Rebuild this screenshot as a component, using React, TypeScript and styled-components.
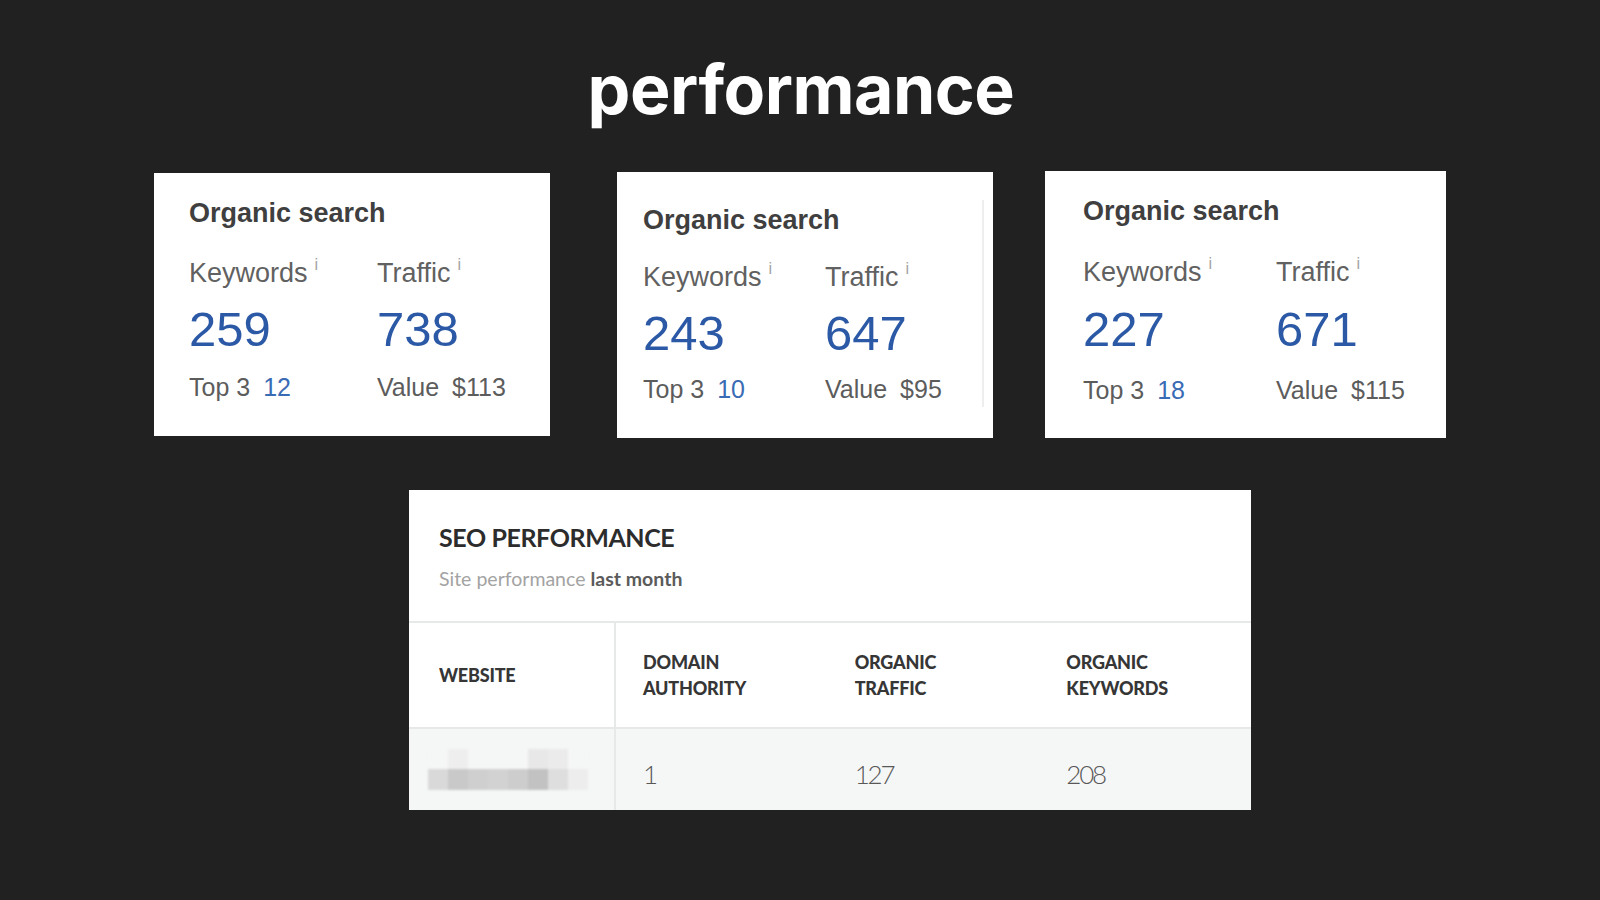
import React from "react";
import styled, { createGlobalStyle } from "styled-components";

const Global = createGlobalStyle`
  html, body { margin: 0; padding: 0; background: #202120; }
  body { width: 1600px; height: 900px; overflow: hidden; }
  * { box-sizing: border-box; }
`;

const Page = styled.div`
  width: 1600px;
  height: 900px;
  display: flex;
  flex-direction: column;
  background: #202120;
`;

const Heading = styled.h1`
  margin: 0;
  padding-top: 55px;
  padding-left: 2px;
  text-align: center;
  font-family: Inter, "Liberation Sans", sans-serif;
  font-weight: 700;
  font-size: 68px;
  line-height: 68px;
  letter-spacing: -0.5px;
  color: #ffffff;
`;

const CardRow = styled.div`
  display: flex;
  align-items: flex-start;
  margin-top: 48px;
  padding-left: 154px;
`;

const Card = styled.div<{ $w: number; $h: number; $mt: number; $ml: number; $pl: number; $pt: number; $edge?: boolean }>`
  position: relative;
  width: ${(p) => p.$w}px;
  height: ${(p) => p.$h}px;
  margin-top: ${(p) => p.$mt}px;
  margin-left: ${(p) => p.$ml}px;
  padding: ${(p) => p.$pt}px 0 0 ${(p) => p.$pl}px;
  background: #ffffff;
  font-family: "Liberation Sans", Arial, sans-serif;
  ${(p) =>
    p.$edge &&
    `&::after {
      content: "";
      position: absolute;
      right: 9px;
      top: 28px;
      height: 207px;
      width: 2px;
      background: #eeeeee;
    }`}
`;

const CardTitle = styled.div`
  font-size: 27px;
  line-height: 32px;
  font-weight: 700;
  color: #3f3f3f;
`;

const StatGrid = styled.div<{ $col: number; $gap: number }>`
  display: grid;
  grid-template-columns: ${(p) => p.$col}px auto;
  margin-top: ${(p) => p.$gap}px;
`;

const Stat = styled.div`
  display: flex;
  flex-direction: column;
`;

const Label = styled.div`
  font-size: 27px;
  line-height: 30px;
  color: #616161;
  white-space: nowrap;
`;

const Info = styled.span`
  display: inline-block;
  margin-left: 7px;
  font-size: 16px;
  line-height: 16px;
  vertical-align: 12px;
  color: #a4a4a4;
`;

const BigNum = styled.div<{ $gap: number }>`
  margin-top: ${(p) => p.$gap}px;
  font-size: 49px;
  line-height: 56px;
  color: #2b59a6;
`;

const Sub = styled.div<{ $gap: number }>`
  margin-top: ${(p) => p.$gap}px;
  font-size: 25px;
  line-height: 28px;
  color: #5c5c5c;
  white-space: nowrap;
`;

const SubVal = styled.span<{ $blue?: boolean }>`
  margin-left: 13px;
  color: ${(p) => (p.$blue ? "#3a6bb5" : "#5c5c5c")};
`;

const TableCard = styled.div`
  margin-top: 52px;
  margin-left: 409px;
  width: 842px;
  height: 320px;
  background: #ffffff;
  font-family: Lato, "Open Sans", sans-serif;
  display: flex;
  flex-direction: column;
`;

const TableHead = styled.div`
  padding: 32px 30px 31px;
`;

const TableTitle = styled.div`
  font-size: 25px;
  line-height: 30px;
  font-weight: 700;
  color: #2c2c2c;
  letter-spacing: -0.4px;
`;

const TableSub = styled.div`
  margin-top: 16px;
  font-size: 19.5px;
  line-height: 22px;
  color: #a3a3a3;
  letter-spacing: 0;
  b {
    font-weight: 700;
    color: #5b5b5b;
  }
`;

const Grid = styled.div`
  display: grid;
  grid-template-columns: 207px 1fr 1fr 1fr;
  grid-template-rows: 108px 1fr;
  flex: 1;
`;

const HeadCell = styled.div<{ $first?: boolean }>`
  border-top: 2px solid #e7e9e9;
  border-bottom: 2px solid #e7e9e9;
  ${(p) => (p.$first ? "border-right: 2px solid #e7e9e9;" : "")}
  padding-left: ${(p) => (p.$first ? 30 : 27)}px;
  display: flex;
  align-items: center;
  font-size: 18px;
  line-height: 26px;
  font-weight: 900;
  color: #363636;
  letter-spacing: -0.2px;
`;

const BodyCell = styled.div<{ $first?: boolean }>`
  background: #f5f6f6;
  ${(p) => (p.$first ? "border-right: 2px solid #e7e9e9;" : "")}
  padding: ${(p) => (p.$first ? "20px 0 0 19px" : "30px 0 0 27px")};
  font-size: 26px;
  line-height: 30px;
  font-weight: 300;
  color: #585858;
  letter-spacing: -2.2px;
`;

const Pixelated = styled.div`
  display: flex;
  filter: blur(0.8px);
`;

const PixelCol = styled.div`
  display: flex;
  flex-direction: column;
  width: 20px;
`;

const Pixel = styled.div<{ $c: string; $h: number }>`
  height: ${(p) => p.$h}px;
  background: ${(p) => p.$c};
`;

const pixels: [string, string][] = [
  ["#f5f6f6", "#d9d9d9"],
  ["#eeeeee", "#c9c9c9"],
  ["#f5f6f6", "#cfcfcf"],
  ["#f5f6f6", "#d2d2d2"],
  ["#f5f6f6", "#cdcdcd"],
  ["#e8e8e8", "#c2c2c2"],
  ["#ebebeb", "#dedede"],
  ["#f5f6f6", "#ededed"],
];

type CardData = {
  w: number; h: number; mt: number; ml: number; pl: number; pt: number; col: number; edge?: boolean;
  g1: number; g2: number; g3: number;
  kw: string; tr: string; top3: string; value: string;
};

const cards: CardData[] = [
  { w: 396, h: 263, mt: 2, ml: 0, pl: 35, pt: 24, col: 188, g1: 28, g2: 13, g3: 16, kw: "259", tr: "738", top3: "12", value: "$113" },
  { w: 376, h: 266, mt: 1, ml: 67, pl: 26, pt: 32, col: 182, edge: true, g1: 25, g2: 13, g3: 14, kw: "243", tr: "647", top3: "10", value: "$95" },
  { w: 401, h: 267, mt: 0, ml: 52, pl: 38, pt: 24, col: 193, g1: 29, g2: 14, g3: 19, kw: "227", tr: "671", top3: "18", value: "$115" },
];

export default function App() {
  return (
    <Page>
      <Global />
      <Heading>performance</Heading>
      <CardRow>
        {cards.map((c, i) => (
          <Card key={i} $w={c.w} $h={c.h} $mt={c.mt} $ml={c.ml} $pl={c.pl} $pt={c.pt} $edge={c.edge}>
            <CardTitle>Organic search</CardTitle>
            <StatGrid $col={c.col} $gap={c.g1}>
              <Stat>
                <Label>
                  Keywords<Info>i</Info>
                </Label>
                <BigNum $gap={c.g2}>{c.kw}</BigNum>
                <Sub $gap={c.g3}>
                  Top 3<SubVal $blue>{c.top3}</SubVal>
                </Sub>
              </Stat>
              <Stat>
                <Label>
                  Traffic<Info>i</Info>
                </Label>
                <BigNum $gap={c.g2}>{c.tr}</BigNum>
                <Sub $gap={c.g3}>
                  Value<SubVal>{c.value}</SubVal>
                </Sub>
              </Stat>
            </StatGrid>
          </Card>
        ))}
      </CardRow>
      <TableCard>
        <TableHead>
          <TableTitle>SEO PERFORMANCE</TableTitle>
          <TableSub>
            Site performance <b>last month</b>
          </TableSub>
        </TableHead>
        <Grid>
          <HeadCell $first>WEBSITE</HeadCell>
          <HeadCell>
            DOMAIN
            <br />
            AUTHORITY
          </HeadCell>
          <HeadCell>
            ORGANIC
            <br />
            TRAFFIC
          </HeadCell>
          <HeadCell>
            ORGANIC
            <br />
            KEYWORDS
          </HeadCell>
          <BodyCell $first>
            <Pixelated>
              {pixels.map(([t, b], i) => (
                <PixelCol key={i}>
                  <Pixel $c={t} $h={20} />
                  <Pixel $c={b} $h={21} />
                </PixelCol>
              ))}
            </Pixelated>
          </BodyCell>
          <BodyCell>1</BodyCell>
          <BodyCell>127</BodyCell>
          <BodyCell>208</BodyCell>
        </Grid>
      </TableCard>
    </Page>
  );
}
